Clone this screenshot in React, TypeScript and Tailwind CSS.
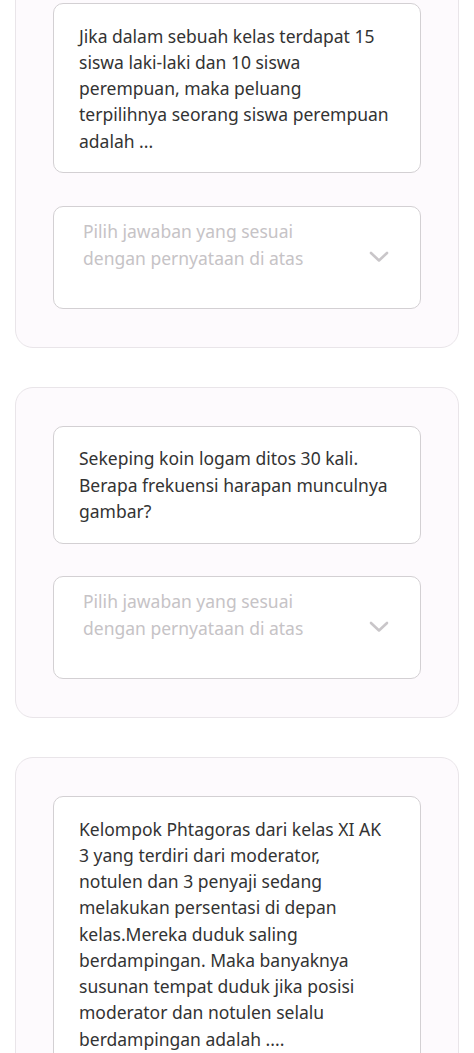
import React from 'react';

type Question = {
  lines: string[];
  answer?: boolean;
};

const QUESTIONS: Question[] = [
  {
    lines: [
      'Jika dalam sebuah kelas terdapat 15',
      'siswa laki-laki dan 10 siswa',
      'perempuan, maka peluang',
      'terpilihnya seorang siswa perempuan',
      'adalah ...',
    ],
    answer: true,
  },
  {
    lines: [
      'Sekeping koin logam ditos 30 kali.',
      'Berapa frekuensi harapan munculnya',
      'gambar?',
    ],
    answer: true,
  },
  {
    lines: [
      'Kelompok Phtagoras dari kelas XI AK',
      '3 yang terdiri dari moderator,',
      'notulen dan 3 penyaji sedang',
      'melakukan persentasi di depan',
      'kelas.Mereka duduk saling',
      'berdampingan. Maka banyaknya',
      'susunan tempat duduk jika posisi',
      'moderator dan notulen selalu',
      'berdampingan adalah ....',
    ],
    answer: true,
  },
];

const Chevron = () => (
  <svg width="20" height="12" viewBox="0 0 20 12" fill="none" className="shrink-0">
    <path d="M2 2 L10 9.5 L18 2" stroke="#c9c6c9" strokeWidth="2.6" strokeLinecap="round" strokeLinejoin="round" />
  </svg>
);

const QuestionCard: React.FC<{ q: Question; first?: boolean }> = ({ q, first }) => (
  <div
    className={`mx-[15px] rounded-[18px] border border-[#e9e5e9] bg-[#fdfafd] px-[37px] pt-[38px] pb-[38px] ${
      first ? '-mt-[36px]' : ''
    }`}
  >
    {/* Question text */}
    <div className="rounded-[10px] border border-[#d3d0d3] bg-white pl-[25px] pr-[8px] py-[18.5px]">
      {q.lines.map((line, i) => (
        <div key={i} className="whitespace-nowrap text-[17.5px] leading-[26.25px] text-[#333333]">
          {line}
        </div>
      ))}
    </div>

    {/* Answer dropdown */}
    {q.answer && (
      <div className="mt-[32.5px] flex h-[103px] items-start rounded-[10px] border border-[#d3d0d3] bg-white pl-[29px] pr-[31px] pt-[11px]">
        <div className="flex-1 text-[17.5px] leading-[27px] text-[#c6c3c6]">
          <div className="whitespace-nowrap">Pilih jawaban yang sesuai</div>
          <div className="whitespace-nowrap">dengan pernyataan di atas</div>
        </div>
        <div className="mt-[33px]">
          <Chevron />
        </div>
      </div>
    )}
  </div>
);

export default function App() {
  return (
    <div
      className="h-[1053px] overflow-hidden bg-white flex flex-col gap-[39px]"
      style={{ fontFamily: '"Noto Sans", "Open Sans", sans-serif' }}
    >
      {QUESTIONS.map((q, i) => (
        <QuestionCard key={i} q={q} first={i === 0} />
      ))}
    </div>
  );
}
